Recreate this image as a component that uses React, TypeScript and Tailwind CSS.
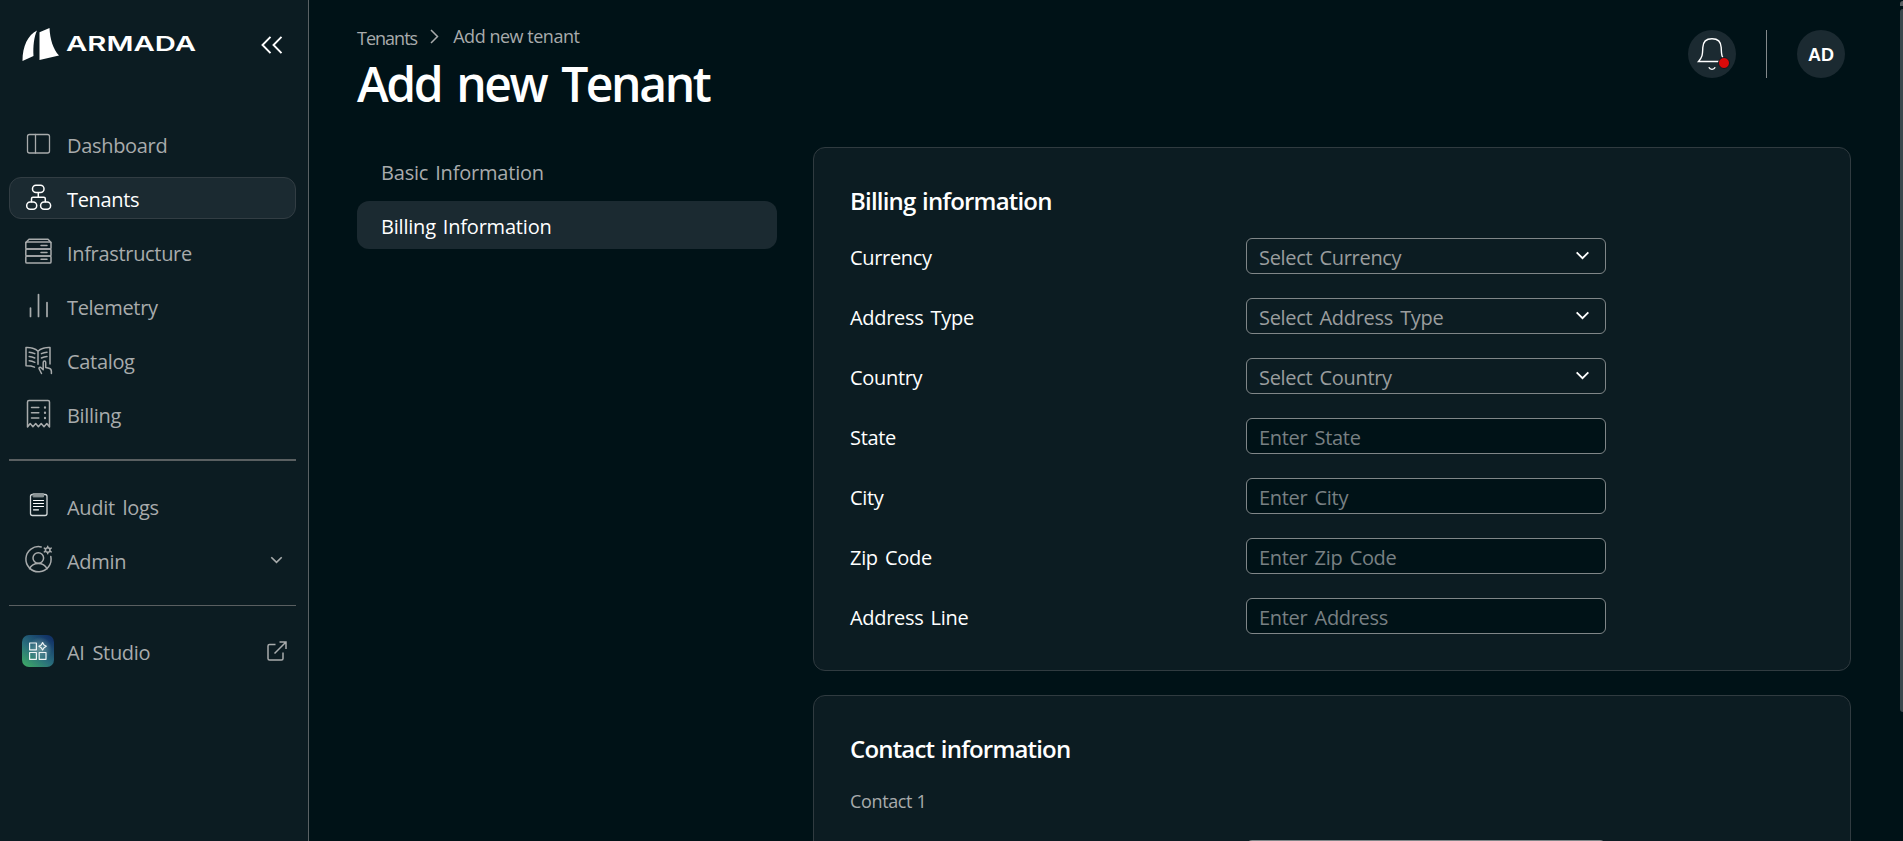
import type { ReactNode } from "react";

type IconProps = { children: ReactNode; className?: string };

function Icon({ children, className = "" }: IconProps) {
  return (
    <svg
      viewBox="0 0 32 32"
      fill="none"
      stroke="currentColor"
      strokeWidth="1.5"
      strokeLinecap="round"
      strokeLinejoin="round"
      className={`size-8 shrink-0 ${className}`}
    >
      {children}
    </svg>
  );
}

const DashboardIcon = () => (
  <Icon>
    <rect x="5.5" y="6.5" width="22" height="18.5" rx="2" strokeWidth="1.3" />
    <path d="M13.5 6.5v18.5" strokeWidth="1.3" />
  </Icon>
);

const TenantsIcon = () => (
  <Icon className="text-white">
    <rect x="10.5" y="3.2" width="11.5" height="7.3" rx="3.5" />
    <rect x="4.7" y="20" width="10" height="7.2" rx="3.5" />
    <rect x="18.6" y="20" width="10" height="7.2" rx="3.5" />
    <path d="M16.3 10.700v4.500M9.500 19.700v-3a1.500 1.500 0 0 1 1.500-1.500h10.800a1.500 1.500 0 0 1 1.500 1.500v3" />
  </Icon>
);

const InfrastructureIcon = () => (
  <Icon>
    <path d="M3.800 6.500 7 3.300h19l3 3.200" />
    <rect x="3.8" y="6.1" width="25.2" height="7" rx="1.2" />
    <rect x="3.8" y="13.1" width="25.2" height="7" rx="1.2" />
    <rect x="3.8" y="20.1" width="25.2" height="7" rx="1.2" />
    <path d="M19 9.600h6M19 16.600h6M19 23.300h6" />
  </Icon>
);

const TelemetryIcon = () => (
  <Icon>
    <path d="M8.500 18v8.500M16.500 4.500v22M25 12.500v14" strokeWidth="1.7" />
  </Icon>
);

const CatalogIcon = () => (
  <Icon>
    <path d="M16 7.200C13.500 4.700 8 3.200 4 3.500v18.300c3 0 6 .2 8.500 1.300M16 7.200C18.500 4.700 24 3.200 28 3.500v16.500M16 7.200v13" />
    <path d="M7.200 8.200c2 .1 3.800.6 5.600 1.500M7.200 12.500c2 .1 3.800.6 5.600 1.500M7.200 16.800c2 .1 3.800.6 5.600 1.500M25 8.200c-2 .1-3.800.6-5.600 1.500M25 12.500c-2 .1-3.800.6-5.600 1.500" />
    <path d="M19.500 29.500 17.200 25c-.8-1.500 1-2.500 2.200-1l1.800 1.700v-7.200c0-2 2.500-2 2.500 0v5l3.200.8c2 .5 2.500 1.800 2.500 3.200v2" />
  </Icon>
);

const BillingIcon = () => (
  <Icon>
    <path d="M5.500 29V4c0-1 .5-1.500 1.500-1.500h19c1 0 1.500.5 1.500 1.500v25l-2.700-3.500-2.800 3.300-2.800-3.300-2.800 3.300-2.700-3.300-2.800 3.300L8.200 25.500z" />
    <path d="M9.500 9.500h7.300M9.500 14.700h7.300M9.500 20h7.300" />
    <path d="M23 9.300v.4M23 14.500v.4M23 19.800v.4" strokeWidth="2.2" />
  </Icon>
);

const AuditIcon = () => (
  <Icon>
    <rect x="8.5" y="4.5" width="16.5" height="21" rx="2" stroke="#d3d8d9" strokeWidth="1.3" />
    <rect x="11.5" y="3.5" width="10" height="3.4" fill="#8b9496" stroke="#8b9496" strokeWidth="1" />
    <path d="M11.500 10.500h10M11.500 13.500h10M11.500 16.500h10M11.500 19.800h5" stroke="#fff" strokeWidth="1.2" />
  </Icon>
);

const AdminIcon = () => (
  <Icon>
    <path d="M19.200 2.900A12.600 12.600 0 1 0 28.800 12.500" />
    <circle cx="16.3" cy="14" r="5.3" />
    <path d="M7.500 24.800c1.500-3.200 4.900-5.200 8.800-5.200s7.200 2 8.700 5.200" />
    <circle cx="25.7" cy="6" r="2.3" />
    <path d="M25.700 2.200v1.300M25.700 8.500v1.300M22.300 4.100l1.300.7M27.900 7.200l1.300.7M22.300 7.900l1.300-.7M27.900 4.800l1.300-.7" />
  </Icon>
);

const AiStudioIcon = () => (
  <svg viewBox="0 0 32 32" className="size-8 shrink-0" fill="none">
    <defs>
      <linearGradient id="studio" x1="4" y1="32" x2="27" y2="2" gradientUnits="userSpaceOnUse">
        <stop stopColor="#3da766" />
        <stop offset="0.45" stopColor="#2a6f7c" />
        <stop offset="1" stopColor="#123367" />
      </linearGradient>
      <radialGradient id="glow">
        <stop stopColor="#7fa6a8" stopOpacity="0.75" />
        <stop offset="1" stopColor="#7fa6a8" stopOpacity="0" />
      </radialGradient>
    </defs>
    <rect width="32" height="32" rx="7" fill="url(#studio)" />
    <circle cx="18" cy="14" r="12" fill="url(#glow)" />
    <g stroke="#eef4f5" strokeWidth="1.2" strokeLinejoin="round">
      <rect x="7.6" y="8" width="6.8" height="6.8" />
      <rect x="7.6" y="17.5" width="6.8" height="6.8" />
      <rect x="17.2" y="17.5" width="6.8" height="6.8" />
      <path d="M20.600 7.600 22 10l2.300 1.300L22 12.700 20.600 15l-1.400-2.300-2.300-1.400 2.300-1.300z" />
    </g>
  </svg>
);

const ChevronDown = ({ className }: { className: string }) => (
  <svg viewBox="0 0 16 10" fill="none" stroke="currentColor" strokeWidth="2" className={className}>
    <path d="M1.500 1.500 8 8l6.500-6.500" />
  </svg>
);

type NavItemProps = {
  icon: ReactNode;
  label: string;
  active?: boolean;
  trailing?: ReactNode;
};

function NavItem({ icon, label, active, trailing }: NavItemProps) {
  return (
    <a
      className={`flex h-[42px] items-center rounded-xl border pl-[12px] ${
        active ? "border-[#323d43] bg-[#1b2a31] text-white" : "border-transparent text-[#a8abac]"
      }`}
    >
      {icon}
      <span className="ml-[13px] pt-[3px] text-xl tracking-[-0.016em] [word-spacing:0.15em]">
        {label}
      </span>
      {trailing && <span className="ml-auto">{trailing}</span>}
    </a>
  );
}

function Sidebar() {
  const items = [
    { label: "Dashboard", icon: <DashboardIcon /> },
    { label: "Tenants", icon: <TenantsIcon />, active: true },
    { label: "Infrastructure", icon: <InfrastructureIcon /> },
    { label: "Telemetry", icon: <TelemetryIcon /> },
    { label: "Catalog", icon: <CatalogIcon /> },
    { label: "Billing", icon: <BillingIcon /> },
  ];

  return (
    <aside className="w-[309px] shrink-0 border-r border-[#5a6164] bg-[#0c1c22] pr-3 pl-[9px]">
      <div className="flex h-[123px] items-start pt-7 pl-[13px]">
        <svg viewBox="0 0 37 33" fill="#fff" className="h-[33px] w-[37px]">
          <path d="M15 2.500C6 7 .5 18 .5 33l11-5C11 18 12 9 15 2.500z" />
          <path d="M17.500 4.300 27.500 0c.5 11 3.500 21 9.500 27.500L17.500 32z" />
        </svg>
        <svg viewBox="0 0 130 20" className="mt-[7px] ml-[7px] h-5 w-[130px] overflow-visible">
          <text
            x="0"
            y="16"
            textLength="130"
            lengthAdjust="spacingAndGlyphs"
            fill="#fff"
            className="font-['Inter',sans-serif] text-[20.5px] font-semibold"
          >
            ARMADA
          </text>
        </svg>
        <svg
          viewBox="0 0 22 18"
          fill="none"
          stroke="#fff"
          strokeWidth="1.9"
          className="mt-2 ml-[65px] h-[18px] w-[22px]"
        >
          <path d="M9.500 .8 1.500 9l8 8.200M20.500 .8l-8 8.200 8 8.200" />
        </svg>
      </div>

      <nav className="flex flex-col gap-3">
        {items.map((item) => (
          <NavItem key={item.label} {...item} />
        ))}
      </nav>

      <div className="mt-6 h-0.5 bg-[#5a5f61]" />

      <nav className="mt-6 flex flex-col gap-3">
        <NavItem label="Audit logs" icon={<AuditIcon />} />
        <NavItem
          label="Admin"
          icon={<AdminIcon />}
          trailing={<ChevronDown className="mr-3 h-2 w-[13px]" />}
        />
      </nav>

      <div className="mt-6 h-px bg-[#5a5f61]" />

      <nav className="mt-6">
        <NavItem
          label="AI Studio"
          icon={<AiStudioIcon />}
          trailing={
            <svg
              viewBox="0 0 20 20"
              fill="none"
              stroke="currentColor"
              strokeWidth="1.5"
              className="mr-2 size-5"
            >
              <path d="M8.500 3.500H2.500a1.500 1.500 0 0 0-1.500 1.500v12.500a1.500 1.500 0 0 0 1.500 1.500h12a1.500 1.500 0 0 0 1.500-1.500v-6M7.500 12.500 19 1M12.500 1H19v7" />
            </svg>
          }
        />
      </nav>
    </aside>
  );
}

function HeaderActions() {
  return (
    <div className="mt-[30px] mr-[6px] flex items-center">
      <div className="relative flex size-12 items-center justify-center rounded-full bg-[#1b2a31]">
        <svg viewBox="0 0 48 48" fill="none" stroke="#fff" strokeWidth="1.4" className="size-12">
          <path d="M10.500 31.500c4.500-5 4-8 4.300-14C15 12 18.500 8.700 24 8.700S33 12 33.200 17.500c.3 6-.2 9 4.300 14z" />
          <path d="M20.800 37.300c1.300 2.700 5.100 2.700 6.400 0" />
        </svg>
        <span className="absolute top-[27px] left-[30px] size-3 rounded-full border border-[#0c1c22] bg-[#dc0a0a]" />
      </div>
      <div className="ml-[30px] h-12 w-px bg-[#83898b]" />
      <div className="ml-[30px] flex size-12 items-center justify-center rounded-full bg-[#1b2a31] pt-px font-['Liberation_Sans',sans-serif] text-lg font-bold">
        AD
      </div>
    </div>
  );
}

type Field = { label: string; placeholder: string; select?: boolean };

function FormRow({ label, placeholder, select }: Field) {
  return (
    <div className="flex h-9 items-center text-xl tracking-[-0.016em] [word-spacing:0.12em]">
      <label className="w-[396px] pt-[3px]">{label}</label>
      <div
        className={`flex h-9 w-[360px] items-center justify-between rounded-md border border-[#808688] pr-[15px] pl-3 ${
          select ? "text-[#9a9d9e]" : "bg-[#001217] text-[#788083]"
        }`}
      >
        <span className="pt-[3px]">{placeholder}</span>
        {select && <ChevronDown className="mb-px h-[9px] w-[15px] text-white" />}
      </div>
    </div>
  );
}

const billingFields: Field[] = [
  { label: "Currency", placeholder: "Select Currency", select: true },
  { label: "Address Type", placeholder: "Select Address Type", select: true },
  { label: "Country", placeholder: "Select Country", select: true },
  { label: "State", placeholder: "Enter State" },
  { label: "City", placeholder: "Enter City" },
  { label: "Zip Code", placeholder: "Enter Zip Code" },
  { label: "Address Line", placeholder: "Enter Address" },
];

function Card({ title, children }: { title: string; children: ReactNode }) {
  return (
    <section className="shrink-0 rounded-xl border border-[#303b40] bg-[#0c1c22] px-9 pb-9">
      <h2 className="mt-[35px] text-2xl leading-[36px] font-semibold tracking-[-0.034em] [word-spacing:0.05em]">
        {title}
      </h2>
      {children}
    </section>
  );
}

export default function App() {
  return (
    <div className="flex h-[841px] overflow-hidden bg-[#001217] font-['Open_Sans','Noto_Sans',sans-serif] text-white">
      <Sidebar />

      <main className="flex flex-1 flex-col pr-[49px] pl-12">
        <header className="flex h-[147px] shrink-0 items-start justify-between">
          <div>
            <div className="mt-[24px] flex h-6 items-center text-lg leading-6 text-[#a8abac]">
              <span className="pt-[4px] tracking-[-0.055em]">Tenants</span>
              <svg
                viewBox="0 0 9 15"
                fill="none"
                stroke="currentColor"
                strokeWidth="1.5"
                className="ml-[13px] h-[15px] w-[9px]"
              >
                <path d="m1 1 6.500 6.500L1 14" />
              </svg>
              <span className="ml-[14px] tracking-[-0.026em]">Add new tenant</span>
            </div>
            <h1 className="mt-1 text-5xl leading-[64px] font-semibold tracking-[-0.05em] [word-spacing:0.1em]">
              Add new Tenant
            </h1>
          </div>
          <HeaderActions />
        </header>

        <div className="flex min-h-0 flex-1 gap-9">
          <div className="flex w-[420px] flex-col gap-1.5 text-xl tracking-[-0.01em] [word-spacing:0.1em]">
            <div className="flex h-12 items-center rounded-xl px-6 pt-[3px] text-[#a8abac]">
              Basic Information
            </div>
            <div className="flex h-12 items-center rounded-xl bg-[#1b2a31] px-6 pt-[3px]">
              Billing Information
            </div>
          </div>

          <div className="flex flex-1 flex-col gap-6">
            <Card title="Billing information">
              <div className="mt-[19px] flex flex-col gap-6">
                {billingFields.map((field) => (
                  <FormRow key={field.label} {...field} />
                ))}
              </div>
            </Card>
            <Card title="Contact information">
              <div className="mt-[22px] h-6 text-lg leading-6 tracking-[-0.02em] text-[#a8abac]">
                Contact 1
              </div>
              <div className="mt-[27px]">
                <FormRow label="" placeholder="" />
              </div>
            </Card>
          </div>
        </div>
      </main>

      {/* scrollbar along the window edge */}
      <div className="flex w-[3px] shrink-0 flex-col">
        <div className="mt-px h-[5px] w-[3px] rounded-tl-full bg-[#5a6164]" />
        <div className="mt-[3px] h-[703px] w-[3px] rounded-l-sm bg-[#3b474c]" />
      </div>
    </div>
  );
}
